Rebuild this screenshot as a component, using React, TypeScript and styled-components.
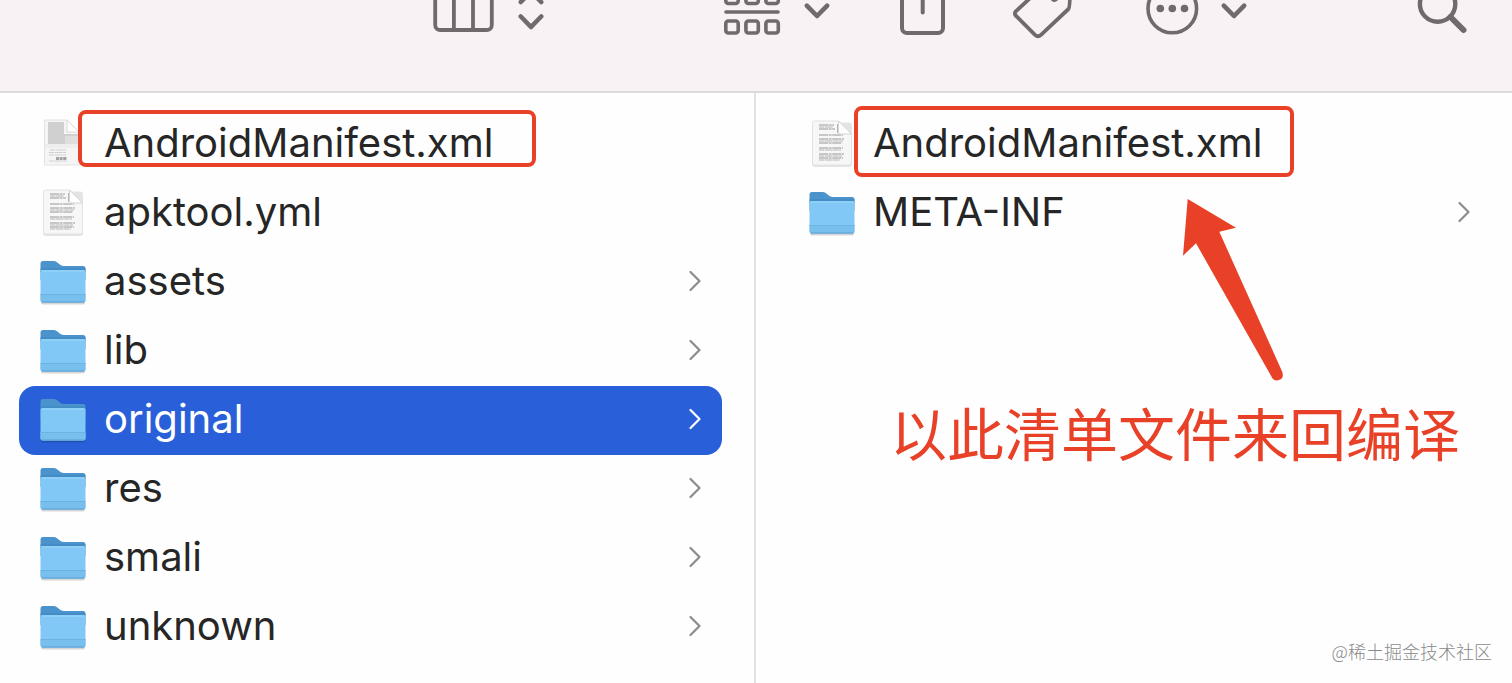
import React from "react";
import styled, { createGlobalStyle, css } from "styled-components";

const RED = "#e84127";
const ICON = "#716a6d";

const GlobalStyle = createGlobalStyle`
  *, *::before, *::after { box-sizing: border-box; }
  html, body, #root { height: 100%; }
  body {
    margin: 0;
    background: #fefefe;
    color: #262626;
    font-family: Inter, "Noto Sans CJK SC", sans-serif;
  }
`;

const Window = styled.div`
  position: relative;
  display: flex;
  flex-direction: column;
  min-height: 100%;
  overflow: hidden;
`;

const Toolbar = styled.header`
  display: flex;
  align-items: flex-start;
  flex: none;
  height: 93px;
  padding: 1px 42px 0 433px;
  background: #f8f2f4;
  border-bottom: 2px solid #dcdadb;
`;

const ToolButton = styled.button<{ $before?: number; $end?: boolean }>`
  display: flex;
  flex: none;
  gap: 23px;
  margin: 0 0 0 ${(p) => (p.$end ? "auto" : `${p.$before ?? 0}px`)};
  padding: 0;
  border: 0;
  background: none;
  color: ${ICON};

  svg {
    display: block;
    overflow: visible;
    fill: none;
    stroke: currentColor;
    stroke-linecap: round;
    stroke-linejoin: round;
  }
`;

const Columns = styled.main`
  display: grid;
  grid-template-columns: 1fr 1fr;
  flex: 1;
`;

const Column = styled.section<{ $divided?: boolean }>`
  position: relative;
  padding: 17px 21px 17px 32px;
  ${(p) =>
    p.$divided &&
    css`
      padding-right: 32px;
      padding-left: 19px;
      border-right: 2px solid #e2e2e2;
    `}
`;

const List = styled.ul`
  margin: 0;
  padding: 0;
  list-style: none;
`;

const Row = styled.button<{ $selected?: boolean }>`
  display: flex;
  align-items: center;
  gap: 18px;
  width: 100%;
  height: 69px;
  padding: 0 21px 4px;
  border: 0;
  border-radius: 16px;
  background: ${(p) => (p.$selected ? "#2960d9" : "transparent")};
  color: ${(p) => (p.$selected ? "#ffffff" : "inherit")};
  font: inherit;
  text-align: left;
`;

const Name = styled.span`
  flex: 1;
  font-size: 40px;
  line-height: 48px;
  white-space: nowrap;
`;

const Glyph = styled.svg`
  display: block;
  flex: none;
  overflow: visible;
`;

const Highlight = styled.div<{ $wide?: boolean }>`
  position: absolute;
  top: ${(p) => (p.$wide ? 17 : 13)}px;
  left: ${(p) => (p.$wide ? 78 : 98)}px;
  width: ${(p) => (p.$wide ? 458 : 440)}px;
  height: ${(p) => (p.$wide ? 57 : 71)}px;
  border: 4px solid ${RED};
  border-radius: 8px;
  pointer-events: none;
`;

const Arrow = styled.svg`
  position: absolute;
  top: 105px;
  left: 426px;
  fill: ${RED};
`;

const Note = styled.p`
  position: absolute;
  top: 302px;
  left: 134px;
  margin: 0;
  color: ${RED};
  font-family: "Noto Sans CJK SC", sans-serif;
  font-size: 57px;
  line-height: 72px;
  white-space: nowrap;
`;

const Watermark = styled.p`
  position: absolute;
  right: 20px;
  bottom: 20px;
  margin: 0;
  color: #8a8a8a;
  font-family: "Noto Sans CJK SC", sans-serif;
  font-size: 18px;
  font-weight: 300;
  line-height: 24px;
`;

function ToolChevron() {
  return (
    <svg width="26" height="40" strokeWidth="4.6">
      <path d="M2.8 4.6 13 15 23.2 4.6" />
    </svg>
  );
}

function Folder() {
  return (
    <Glyph width="46" height="42" viewBox="0 0 46 42">
      <path d="M1 41h44v1.500q0 2-2 2H3q-2 0-2-2z" fill="#000" opacity=".16" />
      <path
        d="M.5 3.500Q.5 1 3 1h10.500q2 0 3.500 1.300l3.500 2.700q1.500 1 3.500 1H43q2.500 0 2.500 2.500V20H.5z"
        fill="#4a93cd"
      />
      <path d="M.5 8h45v4H.5z" fill="#3f87c2" opacity=".6" />
      <path d="M.5 12q0-2 2-2h41q2 0 2 2V40q0 2.500-2.500 2.500H3Q.5 42.500.5 40z" fill="#82c8f6" />
      <path d="M1.500 11h43" stroke="#9bd7fb" />
      <path d="M.5 34.500h45V40q0 2.500-2.500 2.500H3Q.5 42.500.5 40z" fill="#78bfee" />
      <path d="M.5 34.500h45" stroke="#6ab3e4" />
      <path d="M2 42h42" stroke="#5b9fd0" />
    </Glyph>
  );
}

const paragraphs = [
  { y: 5, ends: [25, 24, 26] },
  { y: 15, ends: [34] },
  { y: 19, ends: [35, 34, 33] },
  { y: 28, ends: [34, 32] },
  { y: 34, ends: [35, 33, 34, 31] },
];

function Page() {
  return (
    <Glyph width="46" height="46" viewBox="0 0 46 46">
      <rect x="3" y="2.500" width="40" height="44.500" rx="3" fill="#000" opacity=".1" />
      <path
        d="M3.500 3q0-2 2-2H29.500L42.500 14V43q0 2-2 2h-35q-2 0-2-2z"
        fill="#f7f7f7"
        stroke="#e2e2e2"
      />
      {paragraphs.map(({ y, ends }) =>
        ends.map((end, i) => (
          <path
            key={`${y}-${i}`}
            d={`M10 ${y + i * 2}H${end}`}
            stroke={i % 2 ? "#cccccc" : "#b8b8b8"}
            strokeWidth="1.400"
            strokeDasharray={i % 2 ? "5 .6 8 .6" : "9 .6 3 .6"}
          />
        )),
      )}
      <path d="M29.500 1v11q0 2 2 2h11z" fill="#fff" stroke="#d4d4d4" />
      <path d="M28.500 4v9" stroke="#b5b5b5" />
    </Glyph>
  );
}

function PreviewPage() {
  return (
    <Glyph width="46" height="46" viewBox="0 0 46 46">
      <path d="M4.500 0H27l13 13v32H4.500z" fill="#f5f5f5" stroke="#e2e2e2" />
      <path d="M8 2h16v12h15v2H25v8H8z" fill="#d0d0d0" />
      <path d="M25 16h14v8H25z" fill="#dedede" />
      <path d="M5 24h34v4H5z" fill="#eeeeee" />
      <path d="M27 0v12h12z" fill="#fff" stroke="#d8d8d8" />
      <path d="M10 30h16M9 32.500h17M9 35h17M9 41h18" stroke="#cfcfcf" strokeDasharray="5 .6 8 .6" />
      <path d="M16 38.500h11" stroke="#a2a2a2" strokeWidth="3" strokeDasharray="3 .6" />
    </Glyph>
  );
}

function RowChevron({ selected }: { selected?: boolean }) {
  return (
    <Glyph width="12" height="22" viewBox="0 0 12 22" fill="none">
      <path
        d="M1.500 2 10.500 11 1.500 20"
        stroke={selected ? "#ffffff" : "#8c8c8c"}
        strokeWidth="2.200"
        strokeLinecap="round"
        strokeLinejoin="round"
      />
    </Glyph>
  );
}

type Kind = "folder" | "page" | "preview";
interface Entry {
  name: string;
  kind: Kind;
  selected?: boolean;
}

const glyphs = { folder: Folder, page: Page, preview: PreviewPage };

const projectFiles: Entry[] = [
  { name: "AndroidManifest.xml", kind: "preview" },
  { name: "apktool.yml", kind: "page" },
  { name: "assets", kind: "folder" },
  { name: "lib", kind: "folder" },
  { name: "original", kind: "folder", selected: true },
  { name: "res", kind: "folder" },
  { name: "smali", kind: "folder" },
  { name: "unknown", kind: "folder" },
];

const originalFiles: Entry[] = [
  { name: "AndroidManifest.xml", kind: "page" },
  { name: "META-INF", kind: "folder" },
];

function FileList({ entries }: { entries: Entry[] }) {
  return (
    <List>
      {entries.map(({ name, kind, selected }) => {
        const Icon = glyphs[kind];
        return (
          <li key={name}>
            <Row type="button" $selected={selected}>
              <Icon />
              <Name>{name}</Name>
              {kind === "folder" && <RowChevron selected={selected} />}
            </Row>
          </li>
        );
      })}
    </List>
  );
}

export default function App() {
  return (
    <Window>
      <GlobalStyle />
      <Toolbar>
        <ToolButton type="button" aria-label="View as columns">
          <svg width="62" height="40" strokeWidth="3.8">
            <rect x="2.200" y="-20" width="56.600" height="49" rx="5" />
            <path d="M20.900-18V28M40-18V28" />
          </svg>
          <svg width="26" height="40" strokeWidth="4.6">
            <path d="M2.800 15.500 13 26 23.200 15.500M2.800 1 13-9.500 23.200 1" />
          </svg>
        </ToolButton>
        <ToolButton type="button" aria-label="Group items" $before={179}>
          <svg width="58" height="40" strokeWidth="3.6">
            {[2.8, 22.9, 42.9].map((x) => (
              <g key={x}>
                <rect x={x} y="-9.500" width="12.400" height="12" rx="2.500" />
                <rect x={x} y="20" width="12.400" height="12" rx="2.500" />
              </g>
            ))}
            <path d="M3 11H55" />
          </svg>
          <ToolChevron />
        </ToolButton>
        <ToolButton type="button" aria-label="Share" $before={69}>
          <svg width="48" height="40" strokeWidth="4">
            <rect x="3" y="-20" width="41" height="52" rx="5" />
            <path d="M23.700-20V11.500" />
          </svg>
        </ToolButton>
        <ToolButton type="button" aria-label="Edit tags" $before={66}>
          <svg width="60" height="40" strokeWidth="3.8">
            <path d="M26-11 2.800 10.300Q1 12.500 2.800 14.700L22 33.800Q25 36.500 28 33.800L55.500 8Q57 6.500 57-12" />
            <circle cx="41.500" cy="-3" r="2" fill="currentColor" />
          </svg>
        </ToolButton>
        <ToolButton type="button" aria-label="More actions" $before={72}>
          <svg width="54" height="40" strokeWidth="3.6">
            <circle cx="27.300" cy="7.500" r="24.300" />
            <g fill="currentColor" stroke="none">
              <circle cx="15.300" cy="7.500" r="3.800" />
              <circle cx="27.300" cy="7.500" r="3.800" />
              <circle cx="39.500" cy="7.500" r="3.800" />
            </g>
          </svg>
          <svg width="26" height="40" strokeWidth="4.6">
            <path d="M1.800 4.600 12 15 22.200 4.600" />
          </svg>
        </ToolButton>
        <ToolButton type="button" aria-label="Search" $end>
          <svg width="54" height="40" strokeWidth="4.4">
            <circle cx="21.600" cy="3" r="17.700" />
            <path d="M34.500 16 47.500 29" strokeWidth="6" />
          </svg>
        </ToolButton>
      </Toolbar>
      <Columns>
        <Column $divided>
          <FileList entries={projectFiles} />
          <Highlight $wide />
        </Column>
        <Column>
          <FileList entries={originalFiles} />
          <Highlight />
          <Arrow width="102" height="184">
            <path d="M5.700 1 54 29.700 37.300 33.700 100.300 174Q102 180 98 181.500 93.500 184 90.500 180.500L14 45.300 1 57.700z" />
          </Arrow>
          <Note>以此清单文件来回编译</Note>
        </Column>
      </Columns>
      <Watermark>@稀土掘金技术社区</Watermark>
    </Window>
  );
}
